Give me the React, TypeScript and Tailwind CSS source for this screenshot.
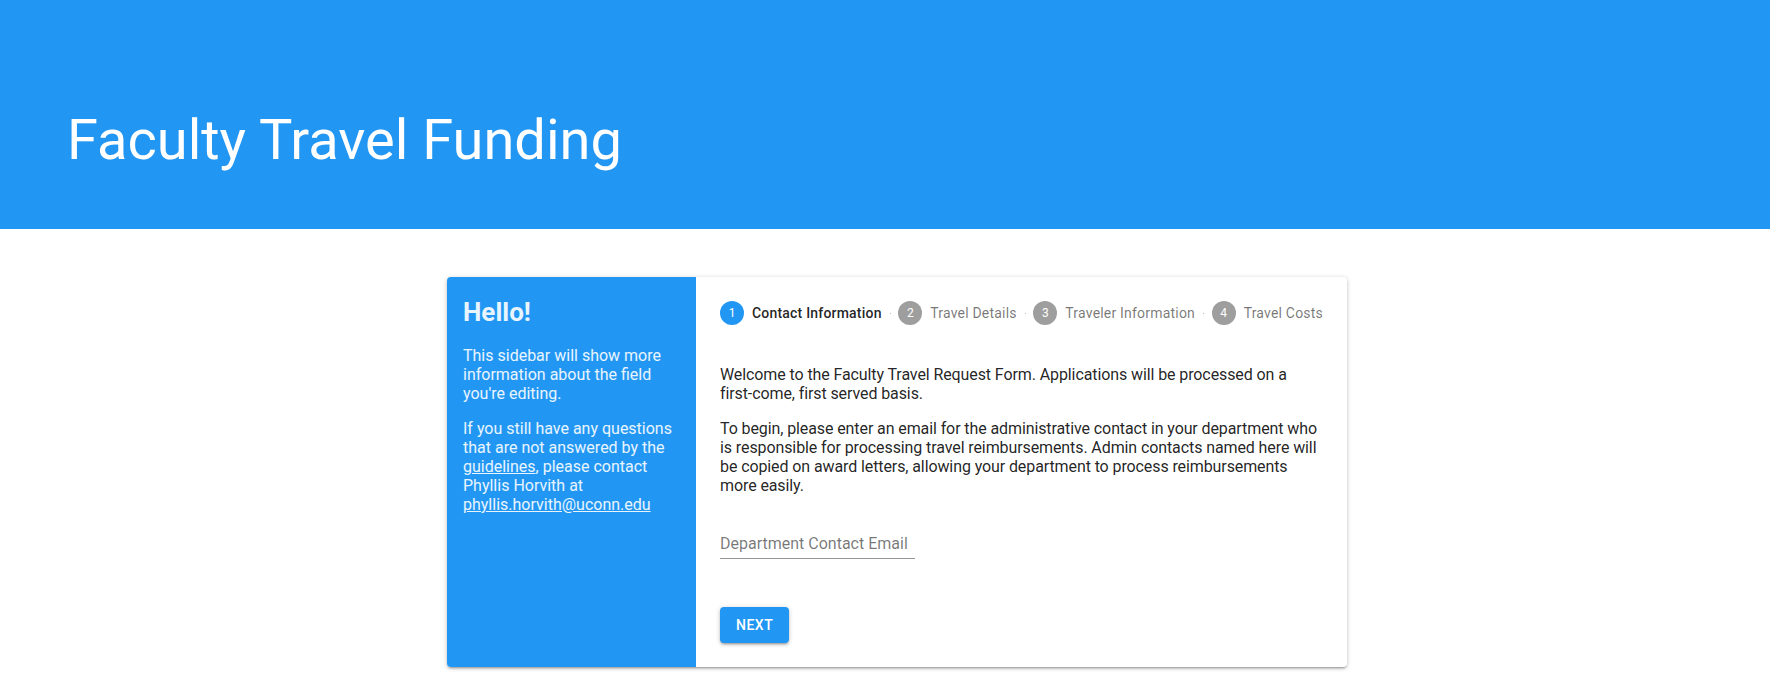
import React from "react";

const steps = [
  { n: 1, label: "Contact Information", active: true },
  { n: 2, label: "Travel Details", active: false },
  { n: 3, label: "Traveler Information", active: false },
  { n: 4, label: "Travel Costs", active: false },
];

export default function App() {
  return (
    <div className="min-h-[685px] bg-white font-['Roboto',sans-serif]">
      <header className="h-[229px] bg-[#2196F3] pl-[67px] pt-[107px]">
        <h1 className="text-[56px] leading-[67px] font-normal text-white">Faculty Travel Funding</h1>
      </header>

      <div className="flex justify-center pl-[24px] pt-[48px] pb-4">
        <div className="flex w-[900px] rounded-[4px] bg-white shadow-[0px_1px_5px_0px_rgba(0,0,0,0.2),0px_2px_2px_0px_rgba(0,0,0,0.14),0px_3px_1px_-2px_rgba(0,0,0,0.12)]">
          <aside className="w-[249px] shrink-0 rounded-l-[4px] bg-[#2196F3] px-4 pt-[20px] text-white/[0.9]">
            <h2 className="text-[26px] leading-[30px] font-bold">Hello!</h2>
            <p className="mt-[19px] text-[16px] leading-[19px]">
              This sidebar will show more information about the field you're editing.
            </p>
            <p className="mt-4 text-[16px] leading-[19px]">
              If you still have any questions that are not answered by the{" "}
              <a className="underline" href="#">guidelines</a>, please contact Phyllis Horvith at{" "}
              <a className="underline" href="#">phyllis.horvith@uconn.edu</a>
            </p>
          </aside>

          <main className="flex-1 px-6 pb-6">
            <div className="flex items-center py-6">
              {steps.map((s, i) => (
                <React.Fragment key={s.n}>
                  {i > 0 && <div className="mx-2 min-w-0 flex-1 border-t border-[#bdbdbd]" />}
                  <div className="flex shrink-0 items-center whitespace-nowrap">
                    <span
                      className={
                        "flex h-6 w-6 items-center justify-center rounded-full text-[12px] text-white " +
                        (s.active ? "bg-[#2196F3]" : "bg-[#9e9e9e]")
                      }
                    >
                      {s.n}
                    </span>
                    <span
                      className={
                        "pl-2 text-[14px] leading-[16px] tracking-[0.2px] " +
                        (s.active ? "font-medium text-black/[0.87]" : "text-black/[0.54]")
                      }
                    >
                      {s.label}
                    </span>
                  </div>
                </React.Fragment>
              ))}
            </div>

            <p className="mt-4 text-[16px] leading-[19px] tracking-[-0.1px] text-black/[0.87]">
              Welcome to the Faculty Travel Request Form. Applications will be processed on a{" "}
              <span className="whitespace-nowrap">first-come,</span> first served basis.
            </p>
            <p className="mt-4 text-[16px] leading-[19px] tracking-[-0.1px] text-black/[0.87]">
              To begin, please enter an email for the administrative contact in your department who is responsible for processing travel reimbursements. Admin contacts named here will be copied on award letters, allowing your department to process reimbursements more easily.
            </p>

            <div className="mt-[32px] h-[32px] w-[195px] border-b border-[#949494] pt-[7px] text-[16px] leading-[19px] text-black/[0.54]">
              Department Contact Email
            </div>

            <button className="mt-[48px] flex h-[36px] min-w-[64px] items-center justify-center rounded-[4px] bg-[#2196F3] px-4 text-[14px] font-medium tracking-[0.5px] text-white shadow-[0px_1px_5px_0px_rgba(0,0,0,0.2),0px_2px_2px_0px_rgba(0,0,0,0.14),0px_3px_1px_-2px_rgba(0,0,0,0.12)]">
              NEXT
            </button>
          </main>
        </div>
      </div>
    </div>
  );
}
